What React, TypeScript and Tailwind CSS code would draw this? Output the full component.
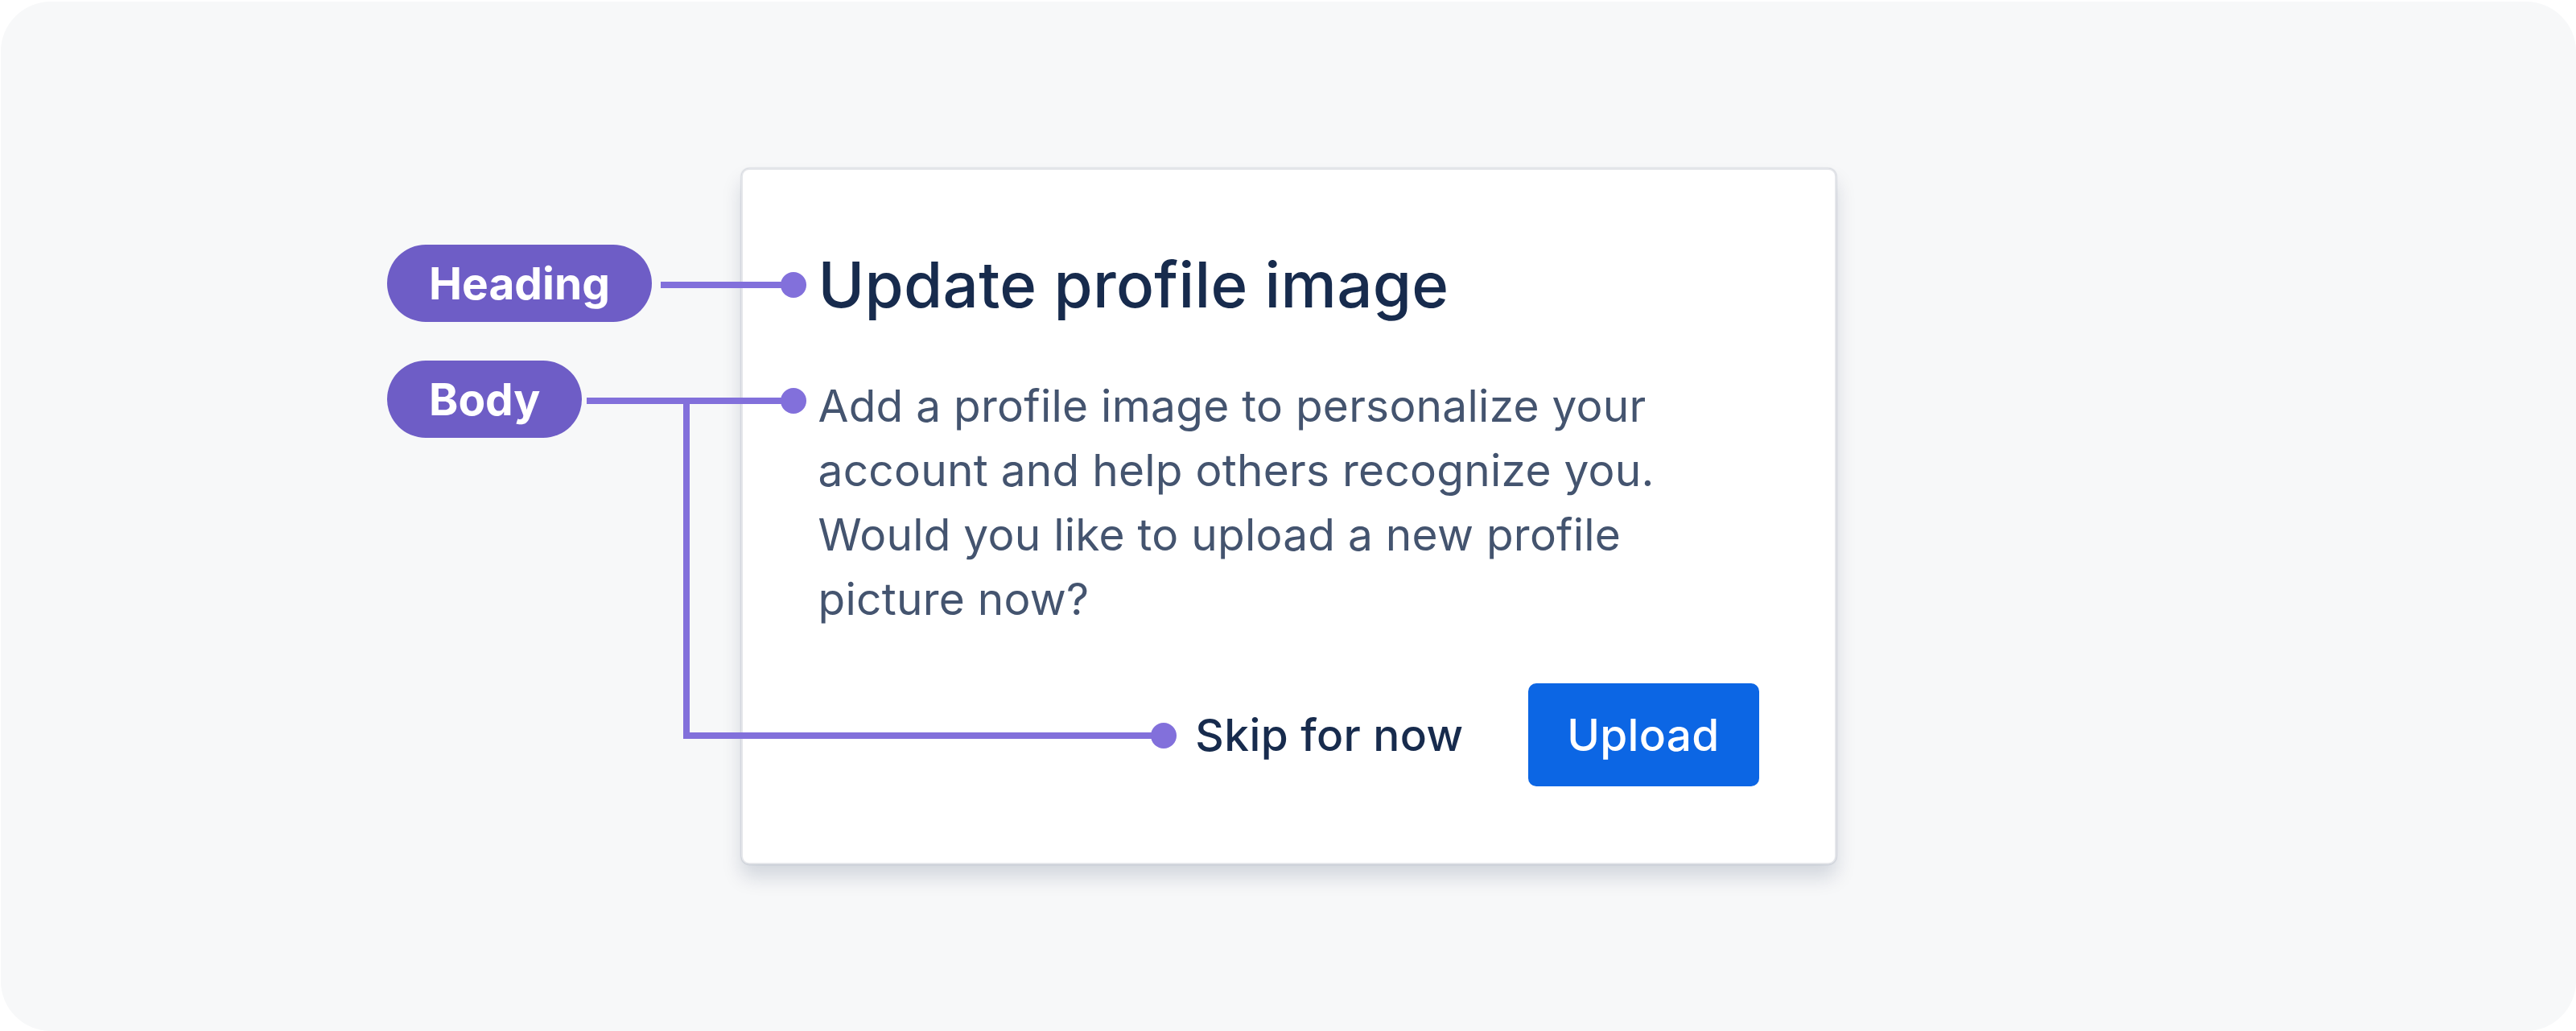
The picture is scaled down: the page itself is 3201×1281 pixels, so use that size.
import React from "react";

export default function App() {
  const font = { fontFamily: '"Inter", "Noto Sans", sans-serif' };
  return (
    <div className="w-[3201px] h-[1281px] bg-white" style={font}>
      <div className="relative ml-[1px] pt-[2px] w-[3200px] h-[1281px]">
        <div className="relative w-[3200px] h-[1279px] rounded-[62px] bg-[#f7f8f9] flex items-center justify-center">
          {/* Card */}
          <div className="w-[1361px] h-[865px] bg-white rounded-[10px] border-2 border-[#e4e6ea] shadow-[0_16px_24px_rgba(9,30,66,0.15),0_0_2px_rgba(9,30,66,0.31)] pl-[94px] pr-[94px] pt-[97px] pb-[95px] flex flex-col">
            <h1 className="text-[78px] leading-[92px] font-medium text-[#172b4d] tracking-[0.3px]">
              Update profile image
            </h1>
            <p className="mt-[64px] text-[55px] leading-[80px] text-[#44546f] tracking-[0.25px] w-[1165px]">
              Add a profile image to personalize your account and help others recognize you. Would you like to upload a new profile picture now?
            </p>
            <div className="mt-auto flex items-center justify-end gap-[80px]">
              <span className="text-[55px] leading-[80px] font-medium text-[#172b4d] tracking-[0.4px]">Skip for now</span>
              <button className="w-[287px] h-[128px] rounded-[10px] bg-[#0c66e4] text-white text-[55px] font-medium tracking-[0.3px] flex items-center justify-center">
                Upload
              </button>
            </div>
          </div>

          {/* Connector drawing */}
          <svg
            className="absolute left-0 top-0 pointer-events-none"
            width="3200"
            height="1279"
            viewBox="1 2 3200 1279"
          >
            <g stroke="#8270db" strokeWidth="8" fill="none" strokeLinecap="butt" strokeLinejoin="miter">
              <line x1="821" y1="354" x2="985" y2="354" />
              <polyline points="729,498 985,498" />
              <polyline points="853,498 853,914 1445,914" />
            </g>
            <g fill="#8270db">
              <circle cx="986" cy="354" r="16" />
              <circle cx="986" cy="498" r="16" />
              <circle cx="1446" cy="914" r="16" />
            </g>
          </svg>

          {/* Labels */}
          <div className="absolute left-[480px] top-[302px] h-[96px] px-[52px] rounded-full bg-[#6e5dc6] text-white text-[55px] font-bold flex items-center">
            Heading
          </div>
          <div className="absolute left-[480px] top-[446px] h-[96px] px-[52px] rounded-full bg-[#6e5dc6] text-white text-[55px] font-bold flex items-center">
            Body
          </div>
        </div>
      </div>
    </div>
  );
}
